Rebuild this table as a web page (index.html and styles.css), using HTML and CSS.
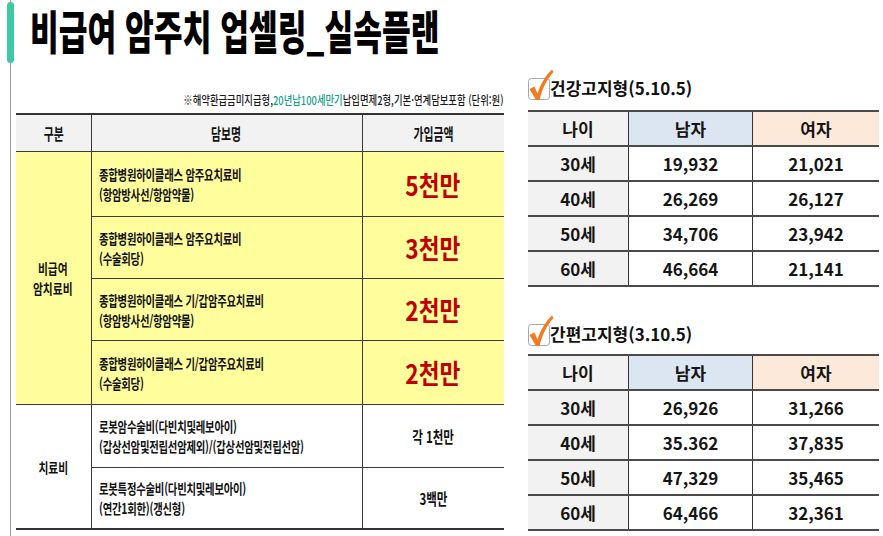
FILE: index.html
```html
<!DOCTYPE html>
<html lang="ko">
<head>
<meta charset="utf-8">
<title>비급여 암주치 업셀링_실속플랜</title>
<link rel="stylesheet" href="styles.css">
</head>
<body>
<div class="page">
  <h1 class="title"><span class="sq">비급여 암주치 업셀링_실속플랜</span></h1>
  <div class="content">
    <section class="left">
      <p class="note"><span class="sq">※해약환급금미지급형,<em>20년납100세만기</em>납입면제2형,기본·연계담보포함 (단위:원)</span></p>
      <table class="plan">
        <colgroup><col class="w1"><col class="w2"><col class="w3"></colgroup>
        <tr class="hd">
          <th class="c1"><span class="sq">구분</span></th>
          <th><span class="sq">담보명</span></th>
          <th class="c3"><span class="sq">가입금액</span></th>
        </tr>
        <tr class="y r1">
          <td class="c1 cat" rowspan="4"><span class="sq">비급여<br>암치료비</span></td>
          <td class="desc"><span class="sq">종합병원하이클래스 암주요치료비<br>(항암방사선/항암약물)</span></td>
          <td class="c3 big"><span class="sq">5천만</span></td>
        </tr>
        <tr class="y r2">
          <td class="desc"><span class="sq">종합병원하이클래스 암주요치료비<br>(수술회당)</span></td>
          <td class="c3 big"><span class="sq">3천만</span></td>
        </tr>
        <tr class="y r3">
          <td class="desc"><span class="sq">종합병원하이클래스 기/갑암주요치료비<br>(항암방사선/항암약물)</span></td>
          <td class="c3 big"><span class="sq">2천만</span></td>
        </tr>
        <tr class="y r4">
          <td class="desc"><span class="sq">종합병원하이클래스 기/갑암주요치료비<br>(수술회당)</span></td>
          <td class="c3 big"><span class="sq">2천만</span></td>
        </tr>
        <tr class="r5">
          <td class="c1 cat" rowspan="2"><span class="sq">치료비</span></td>
          <td class="desc"><span class="sq">로봇암수술비(다빈치및레보아이)<br>(갑상선암및전립선암제외)/(갑상선암및전립선암)</span></td>
          <td class="c3 amt"><span class="sq">각 1천만</span></td>
        </tr>
        <tr class="r6">
          <td class="desc"><span class="sq">로봇특정수술비(다빈치및레보아이)<br>(연간1회한)(갱신형)</span></td>
          <td class="c3 amt"><span class="sq">3백만</span></td>
        </tr>
      </table>
    </section>
    <section class="right">
      <h2 class="head">
        <svg class="chk" viewBox="0 0 24 36" width="24" height="36" aria-hidden="true">
          <rect x="2.5" y="10.5" width="21" height="21" rx="3" fill="#fff" stroke="#a8a8a8"/>
          <path d="M3.5 21 L8.5 18.5 L11.5 25.5 C15 15 20 7 26 1.5 L27.5 4 C21 11 16.5 20 13.5 32 L10 32 Z" fill="#f47a1f"/>
        </svg>건강고지형(5.10.5)
      </h2>
      <table class="rate">
        <tr><th class="age">나이</th><th class="m">남자</th><th class="f">여자</th></tr>
        <tr><td class="age">30세</td><td>19,932</td><td>21,021</td></tr>
        <tr><td class="age">40세</td><td>26,269</td><td>26,127</td></tr>
        <tr><td class="age">50세</td><td>34,706</td><td>23,942</td></tr>
        <tr><td class="age">60세</td><td>46,664</td><td>21,141</td></tr>
      </table>
      <h2 class="head head2">
        <svg class="chk" viewBox="0 0 24 36" width="24" height="36" aria-hidden="true">
          <rect x="2.5" y="10.5" width="21" height="21" rx="3" fill="#fff" stroke="#a8a8a8"/>
          <path d="M3.5 21 L8.5 18.5 L11.5 25.5 C15 15 20 7 26 1.5 L27.5 4 C21 11 16.5 20 13.5 32 L10 32 Z" fill="#f47a1f"/>
        </svg>간편고지형(3.10.5)
      </h2>
      <table class="rate rate2">
        <tr><th class="age">나이</th><th class="m">남자</th><th class="f">여자</th></tr>
        <tr><td class="age">30세</td><td>26,926</td><td>31,266</td></tr>
        <tr><td class="age">40세</td><td>35.362</td><td>37,835</td></tr>
        <tr><td class="age">50세</td><td>47,329</td><td>35,465</td></tr>
        <tr><td class="age">60세</td><td>64,466</td><td>32,361</td></tr>
      </table>
    </section>
  </div>
</div>
</body>
</html>
```

FILE: styles.css
```css
html, body {
  margin: 0;
  background: #fff;
}
body {
  font-family: "Noto Sans CJK KR", "Noto Sans", sans-serif;
  color: #111;
}
.page {
  position: relative;
  margin-left: 10px;
  border-left: 1px solid #9b9b9b;
  height: 536px;
  box-sizing: border-box;
}
.page::before {
  content: "";
  position: absolute;
  left: -4px;
  top: 2px;
  width: 7px;
  height: 61px;
  border-radius: 4px;
  background: #40c9a4;
}
.sq {
  display: inline-block;
  white-space: nowrap;
}
.title {
  margin: 0;
  height: 58px;
  padding-left: 19px;
  display: flex;
  align-items: center;
  font-size: 46px;
  font-weight: 900;
  line-height: 1;
  color: #000;
  white-space: nowrap;
}
.title .sq {
  transform: scaleX(.68);
  transform-origin: 0 50%;
}
.content {
  display: flex;
  align-items: flex-start;
}
.left {
  margin-left: 5px;
  width: 488px;
  flex: none;
}
.note {
  margin: 34px 0 5px;
  height: 16px;
  line-height: 16px;
  font-size: 12px;
  font-weight: 500;
  text-align: right;
  color: #1a1a1a;
  white-space: nowrap;
}
.note .sq {
  transform: scaleX(.78);
  transform-origin: 100% 50%;
}
.note em {
  font-style: normal;
  color: #14a089;
}
.plan {
  width: 488px;
  border-collapse: collapse;
  table-layout: fixed;
  border-top: 2px solid #333;
  border-bottom: 2px solid #333;
}
.plan .w1 { width: 75px; }
.plan .w2 { width: 271px; }
.plan .w3 { width: 142px; }
.plan th, .plan td {
  border: 1px solid #3a3a3a;
  padding: 0;
  text-align: center;
  vertical-align: middle;
}
.plan .c1 { border-left: 0; }
.plan .c3 { border-right: 0; }
.plan .sq {
  transform: scaleX(.68);
  transform-origin: 50% 50%;
}
.plan .hd th {
  height: 36px;
  background: #f2f2f2;
  font-size: 16px;
  font-weight: 700;
}
.plan .y td { background: #fffd9c; }
.plan .r1 td { height: 64px; }
.plan .r2 td, .plan .r3 td { height: 61px; }
.plan .r4 td { height: 63px; }
.plan .r5 td { height: 62px; }
.plan .r6 td { height: 60px; }
.plan .cat {
  font-size: 14px;
  font-weight: 600;
  line-height: 20px;
}
.plan .cat .sq { transform: scaleX(.77); }
.plan .desc {
  text-align: left;
  padding-left: 7px;
  font-size: 14px;
  font-weight: 600;
  line-height: 20px;
  letter-spacing: -0.3px;
}
.plan .desc .sq {
  transform: scaleX(.74);
  transform-origin: 0 50%;
}
.plan .big {
  color: #c00000;
  font-size: 27px;
  font-weight: 700;
}
.plan .big .sq { transform: scaleX(.84); }
.plan .amt {
  font-size: 16px;
  font-weight: 600;
}
.plan .amt .sq { transform: scaleX(.72); }
.right {
  margin-left: 22px;
  width: 354px;
  flex: none;
}
.head {
  margin: 10px 0 0;
  height: 38px;
  display: flex;
  align-items: center;
  font-size: 17px;
  font-weight: 600;
  color: #111;
  white-space: nowrap;
}
.head2 { margin-top: 27px; }
.chk {
  overflow: visible;
  flex: none;
  margin-top: -2px;
}
.rate {
  margin: 4px 0 0 2px;
  width: 351px;
  border-collapse: collapse;
  table-layout: fixed;
}
.rate th, .rate td {
  height: 33px;
  padding: 0;
  border-top: 2px solid #4a4a4a;
  border-bottom: 2px solid #4a4a4a;
  border-left: 1px solid #333;
  border-right: 1px solid #333;
  text-align: center;
  font-size: 17px;
  font-weight: 600;
  color: #151515;
}
.rate th:first-child, .rate td:first-child { border-left: 0; width: 100px; }
.rate th:last-child, .rate td:last-child { border-right: 0; width: 126px; }
.rate .age { background: #f2f2f2; }
.rate .m { background: #dce6f2; }
.rate .f { background: #fde9da; }
.rate2 { margin-top: 2px; }
```
